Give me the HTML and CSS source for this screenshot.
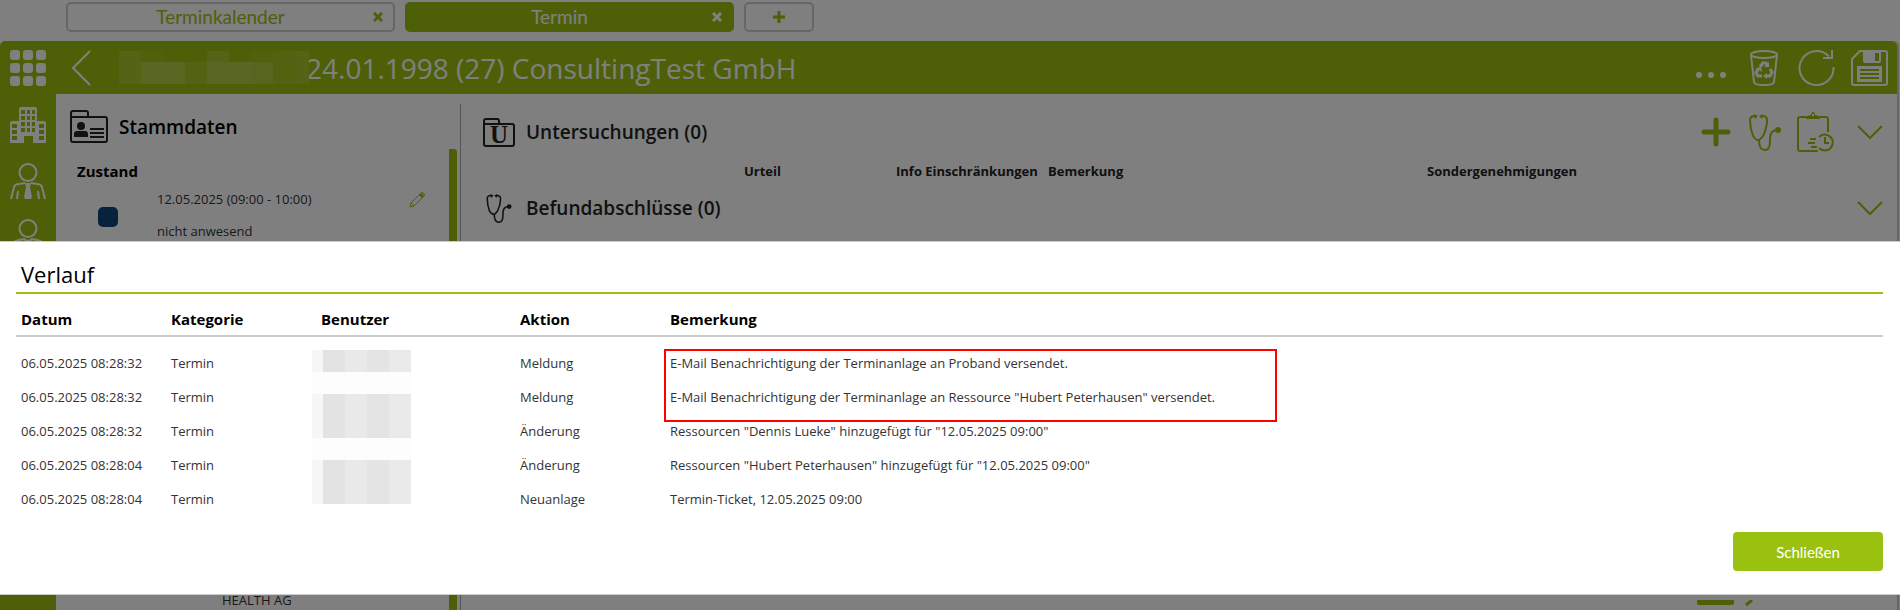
FILE: index.html
```html
<!DOCTYPE html>
<html lang="de">

<head>
  <meta charset="UTF-8" />
  <meta name="viewport" content="width=device-width, initial-scale=1.0" />
  <title>Termin</title>
  <link rel="stylesheet" href="styles.css">
</head>

<body>

  <!-- Tabs -->
  <nav class="tabs">
    <div class="tab">
      <button class="tab-label">Terminkalender</button>
      <button class="tab-close" aria-label="Terminkalender schließen">
        <svg width="10" height="10" viewBox="0 0 10 10"><path d="M1 1l8 8M9 1l-8 8" /></svg>
      </button>
    </div>
    <div class="tab active">
      <button class="tab-label">Termin</button>
      <button class="tab-close" aria-label="Termin schließen">
        <svg width="10" height="10" viewBox="0 0 10 10"><path d="M1 1l8 8M9 1l-8 8" /></svg>
      </button>
    </div>
    <button class="tab-add" aria-label="Neuer Tab">
      <svg width="12" height="12" viewBox="0 0 12 12"><path d="M6 0v12M0 6h12" /></svg>
    </button>
  </nav>

  <div class="app">
    <!-- Kopfzeile -->
    <header class="topbar">
      <button class="icon-btn apps" aria-label="Apps">
        <svg width="36" height="36" viewBox="0 0 36 36" fill="#fff">
          <rect x="0" y="0" width="10" height="10" rx="3" /><rect x="13" y="0" width="10" height="10" rx="3" /><rect x="26" y="0" width="10" height="10" rx="3" />
          <rect x="0" y="13" width="10" height="10" rx="3" /><rect x="13" y="13" width="10" height="10" rx="3" /><rect x="26" y="13" width="10" height="10" rx="3" />
          <rect x="0" y="26" width="10" height="10" rx="3" /><rect x="13" y="26" width="10" height="10" rx="3" /><rect x="26" y="26" width="10" height="10" rx="3" />
        </svg>
      </button>
      <button class="icon-btn back" aria-label="Zurück">
        <svg width="20" height="36" viewBox="0 0 20 36" fill="none" stroke="#fff" stroke-width="2"><path d="M19 1L2 18l17 17" /></svg>
      </button>
      <svg class="name-mask" width="190" height="33" viewBox="0 0 190 33" fill="#fff">
        <rect width="190" height="33" fill="#9bc110" />
        <rect x="0" y="0" width="22" height="33" fill-opacity=".12" />
        <rect x="22" y="0" width="22" height="11" fill-opacity=".03" />
        <rect x="22" y="11" width="44" height="22" fill-opacity=".22" />
        <rect x="66" y="11" width="22" height="22" fill-opacity=".1" />
        <rect x="88" y="0" width="22" height="11" fill-opacity=".12" />
        <rect x="88" y="11" width="44" height="22" fill-opacity=".22" />
        <rect x="132" y="0" width="22" height="11" fill-opacity=".03" />
        <rect x="132" y="11" width="22" height="22" fill-opacity=".2" />
        <rect x="154" y="0" width="22" height="33" fill-opacity=".08" />
        <rect x="176" y="0" width="14" height="33" fill-opacity=".12" />
      </svg>
      <h1>24.01.1998 (27) ConsultingTest GmbH</h1>
      <div class="topbar-actions">
        <button class="icon-btn more" aria-label="Mehr">
          <svg width="30" height="36" viewBox="0 0 30 36" fill="#fff"><circle cx="3" cy="25" r="3" /><circle cx="15" cy="25" r="3" /><circle cx="27" cy="25" r="3" /></svg>
        </button>
        <button class="icon-btn trash" aria-label="Löschen">
          <svg width="28" height="36" viewBox="0 0 28 36" fill="none" stroke="#fff" stroke-width="2">
            <ellipse cx="14" cy="4.500" rx="13" ry="3.500" />
            <path d="M1 5l3 27c0 2 4 3 10 3s10-1 10-3l3-27" />
            <g stroke-width="3"><path d="M10 17l3-4h3l2 3M20 19l2 3-2 4h-4M12 26H8l-2-3 2-4" /></g>
            <path d="M19 12v5h-5zM17 23v6l-4-3zM6 18l5-1 1 5z" fill="#fff" stroke="none" />
          </svg>
        </button>
        <button class="icon-btn" aria-label="Aktualisieren">
          <svg width="37" height="36" viewBox="0 0 37 36" fill="none" stroke="#fff" stroke-width="2"><path d="M35.500 17A17 17 0 1 1 31 6.500M34 0v8h-9" /></svg>
        </button>
        <button class="icon-btn" aria-label="Speichern">
          <svg width="37" height="36" viewBox="0 0 37 36" fill="none" stroke="#fff" stroke-width="2">
            <path d="M9 1h25q2 0 2 2v30q0 2-2 2H3q-2 0-2-2V9z" />
            <path d="M12 1h18v10q0 2-2 2H14q-2 0-2-2zM24 3v8h4V3zM6 16h25v16H6z" fill="#fff" fill-rule="evenodd" stroke="none" />
            <path d="M9 20h19M9 24h19M9 28h19" stroke="#9bc110" />
          </svg>
        </button>
      </div>
    </header>

    <div class="main">
      <!-- Seitenleiste -->
      <aside class="sidebar">
        <svg width="36" height="36" viewBox="0 0 36 36" fill="#fff">
          <path fill-rule="evenodd" d="M11 0h14q2 0 2 3v11h7q2 0 2 2v20H23v-7h-9v7H0V16q0-2 2-2h7V3q0-3 2-3zM11 3v4h4V3zM17 3v4h3V3zM22 3v4h3V3zM11 9v4h4V9zM17 9v4h3V9zM22 9v4h3V9zM11 15v4h4v-4zM17 15v4h3v-4zM22 15v4h3v-4zM11 21v4h4v-4zM17 21v4h3v-4zM22 21v4h3v-4zM2 17v4h5v-4zM2 23v4h5v-4zM2 29v4h5v-4zM29 17v4h5v-4zM29 23v4h5v-4zM29 29v4h5v-4z" />
        </svg>
        <svg width="36" height="36" viewBox="0 0 36 36" fill="none" stroke="#fff" stroke-width="2">
          <circle cx="18" cy="9.500" r="8.500" /><path d="M1 36l3-12q1-3 5-3l6-1M35 36l-3-12q-1-3-5-3l-6-1M8 28l-1 8M28 28l1 8" />
          <path d="M15 20h6l-1 4 2 10-1 2h-6l-1-2 2-10z" fill="#fff" stroke="none" />
        </svg>
        <svg width="36" height="36" viewBox="0 0 36 36" fill="none" stroke="#fff" stroke-width="2">
          <circle cx="18" cy="9.500" r="8.500" /><path d="M3 36V26q0-4 6-5l5-1q4 4 8 0l5 1q6 1 6 5v10" />
        </svg>
      </aside>

      <!-- Stammdaten -->
      <section class="master">
        <div class="master-title">
          <svg width="38" height="34" viewBox="0 0 38 34" fill="none" stroke="#222" stroke-width="2">
            <path d="M1 7V3q0-2 2-2h13q2 0 2 2v4M3 7h32q2 0 2 2v21q0 2-2 2H3q-2 0-2-2V7z" />
            <path d="M20 19h14M20 23h14M20 27h14" /><circle cx="11" cy="16" r="4" fill="#222" stroke="none" /><path d="M4 27v-3q0-3 3-3h8q3 0 3 3v3z" fill="#222" stroke="none" />
          </svg>
          <h2>Stammdaten</h2>
        </div>
        <div class="master-scroll">
          <h3>Zustand</h3>
          <div class="state">
            <span class="state-color"></span>
            <div class="state-text">
              <p>12.05.2025 (09:00 - 10:00)</p>
              <p>nicht anwesend</p>
            </div>
            <button class="icon-btn edit" aria-label="Bearbeiten">
              <svg width="16" height="16" viewBox="0 0 16 16" fill="none" stroke="#9bc110"><path d="M1 15l1-4L12 1q1-1 2 0l1 1q1 1 0 2L5 14zM2 11l3 3" /><path d="M11 2l3 3" stroke-width="3" /></svg>
            </button>
          </div>
          <p class="company">HEALTH AG</p>
        </div>
      </section>

      <!-- Untersuchungen und Befunde -->
      <section class="details">
        <div class="detail-title">
          <svg width="32" height="29" viewBox="0 0 32 29" fill="none" stroke="#222" stroke-width="2">
            <path d="M1 6V3q0-2 2-2h11q2 0 2 2v3M3 6h26q2 0 2 2v18q0 2-2 2H3q-2 0-2-2V6z" />
            <text class="folder-letter" x="16" y="25" text-anchor="middle" fill="#222" stroke="none">U</text>
          </svg>
          <h2>Untersuchungen (0)</h2>
          <div class="detail-actions">
            <button class="icon-btn" aria-label="Hinzufügen">
              <svg width="32" height="30" viewBox="0 0 32 30" fill="none" stroke="#9bc110" stroke-width="5" stroke-linecap="round"><path d="M15 3v24M3 15h24" /></svg>
            </button>
            <button class="icon-btn" aria-label="Befund">
              <svg width="32" height="37" viewBox="0 0 32 37" fill="none" stroke="#9bc110" stroke-width="2">
                <path d="M6 2q-5 0-5 4 0 8 3 16 3 4 5 4t5-4q4-8 4-16 0-4-5-4M10 26q0 10 6 10 5 0 5-9 0-7 2-9 2-2 6-2" />
                <path d="M5 0l4 2-3 3zM14 0l-4 2 3 3z" fill="#9bc110" stroke="none" /><circle cx="29" cy="16" r="3" fill="#9bc110" stroke="none" />
              </svg>
            </button>
            <button class="icon-btn" aria-label="Planen">
              <svg width="38" height="40" viewBox="0 0 38 40" fill="none" stroke="#9bc110" stroke-width="2">
                <path d="M31 20V7q0-2-2-2H3Q1 5 1 7v30q0 2 2 2h18" />
                <path fill-rule="evenodd" d="M9 7q1-4 5-4 0-3 2-3t2 3q4 0 5 4zM15 2v2h2V2z" fill="#9bc110" stroke="none" />
                <path d="M22 25a8 8 0 1 1 0 11M28 25v6h4M13 27h6M11 31h7M14 35h6" />
              </svg>
            </button>
            <button class="icon-btn chevron" aria-label="Untersuchungen aufklappen">
              <svg width="26" height="15" viewBox="0 0 26 15" fill="none" stroke="#9bc110" stroke-width="2"><path d="M1 1l12 12L25 1" /></svg>
            </button>
          </div>
        </div>
        <div class="exam-head">
          <span>Urteil</span><span>Info Einschränkungen</span><span>Bemerkung</span><span>Sondergenehmigungen</span>
        </div>
        <div class="detail-title">
          <svg width="32" height="29" viewBox="0 0 32 37" fill="none" stroke="#222" stroke-width="2">
            <path d="M6 2q-5 0-5 4 0 8 3 16 3 4 5 4t5-4q4-8 4-16 0-4-5-4M10 26q0 10 6 10 5 0 5-9 0-7 2-9 2-2 6-2" />
            <path d="M5 0l4 2-3 3zM14 0l-4 2 3 3z" fill="#222" stroke="none" /><circle cx="29" cy="16" r="3" fill="#222" stroke="none" />
          </svg>
          <h2>Befundabschlüsse (0)</h2>
          <div class="detail-actions">
            <button class="icon-btn chevron" aria-label="Befundabschlüsse aufklappen">
              <svg width="26" height="15" viewBox="0 0 26 15" fill="none" stroke="#9bc110" stroke-width="2"><path d="M1 1l12 12L25 1" /></svg>
            </button>
          </div>
        </div>
        <div class="finding-head">
          <span>Befund</span><span>Befundabschluss</span><span>Bearbeiter</span>
        </div>
        <div class="details-foot">
          <svg width="60" height="10" viewBox="0 0 60 10" fill="none" stroke="#9bc110" stroke-width="2">
            <path d="M0 0h37v3q0 2-2 2H2q-2 0-2-2z" fill="#9bc110" stroke="none" /><path d="M49 5l6-5" stroke-width="3" />
          </svg>
        </div>
      </section>
    </div>
  </div>

  <!-- Dialog Verlauf -->
  <div class="overlay">
    <div class="dialog" role="dialog" aria-labelledby="dialog-title">
      <h2 id="dialog-title">Verlauf</h2>
      <div class="history">
        <table>
          <thead>
            <tr><th class="col-s">Datum</th><th class="col-s">Kategorie</th><th class="col-m">Benutzer</th><th class="col-s">Aktion</th><th>Bemerkung</th></tr>
          </thead>
          <tbody>
            <tr><td>06.05.2025 08:28:32</td><td>Termin</td><td></td><td>Meldung</td><td>E-Mail Benachrichtigung der Terminanlage an Proband versendet.</td></tr>
            <tr><td>06.05.2025 08:28:32</td><td>Termin</td><td></td><td>Meldung</td><td>E-Mail Benachrichtigung der Terminanlage an Ressource "Hubert Peterhausen" versendet.</td></tr>
            <tr><td>06.05.2025 08:28:32</td><td>Termin</td><td></td><td>Änderung</td><td>Ressourcen "Dennis Lueke" hinzugefügt für "12.05.2025 09:00"</td></tr>
            <tr><td>06.05.2025 08:28:04</td><td>Termin</td><td></td><td>Änderung</td><td>Ressourcen "Hubert Peterhausen" hinzugefügt für "12.05.2025 09:00"</td></tr>
            <tr><td>06.05.2025 08:28:04</td><td>Termin</td><td></td><td>Neuanlage</td><td>Termin-Ticket, 12.05.2025 09:00</td></tr>
          </tbody>
        </table>
        <svg class="user-mask" width="99" height="154" viewBox="0 0 99 154">
          <rect width="99" height="154" fill="#fdfdfd" />
          <path d="M0 0h11v22H0zM0 44h11v44H0zM0 110h11v44H0z" fill="#f6f6f4" />
          <path d="M11 0h22v22H11zM11 44h22v44H11zM11 110h22v44H11z" fill="#e3e3e3" />
          <path d="M33 0h22v22H33zM33 44h22v44H33zM33 110h22v44H33z" fill="#e9e9e9" />
          <path d="M55 0h22v22H55zM55 44h22v44H55zM55 110h22v44H55z" fill="#e4e4e4" />
          <path d="M77 0h22v22H77zM77 44h22v44H77zM77 110h22v44H77z" fill="#eaeaea" />
        </svg>
        <div class="marker"></div>
      </div>
      <div class="dialog-foot">
        <button class="btn">Schließen</button>
      </div>
    </div>
  </div>

</body>

</html>
```
FILE: styles.css
```css
* {
  box-sizing: border-box;
}
body {
  margin: 0;
  height: 100vh;
  overflow: hidden;
  display: flex;
  flex-direction: column;
  font-family: "Open Sans", "Noto Sans", sans-serif;
  font-size: 13px;
  color: #333;
  background: #fff;
}
h1, h2, h3, p {
  margin: 0;
}
button {
  font: inherit;
  color: inherit;
  background: none;
  border: none;
  padding: 0;
  cursor: pointer;
}
svg {
  display: block;
}

/* Tabs */
.tabs {
  display: flex;
  gap: 10px;
  padding: 2px 0 9px 66px;
  color: #9bc110;
}
.tab, .tab-add {
  height: 30px;
  border: 2px solid #ccc;
  border-radius: 5px;
}
.tab {
  width: 329px;
  display: flex;
  align-items: center;
  padding-right: 10px;
}
.tab-label {
  flex: 1;
  font-family: Lato, sans-serif;
  font-size: 19px;
  line-height: 26px;
}
.tab path, .tab-add path {
  fill: none;
  stroke: currentColor;
  stroke-width: 3;
}
.tab.active {
  color: #fff;
  background: #9bc110;
  border-color: #9bc110;
}
.tab-add {
  width: 70px;
  display: flex;
  align-items: center;
  justify-content: center;
}

/* Kopfzeile */
.app {
  flex: 1;
  min-height: 0;
  display: flex;
  flex-direction: column;
  margin-right: 1px;
  border-right: 2px solid #ccc;
  border-radius: 5px 5px 0 0;
}
.topbar {
  height: 53px;
  flex: none;
  display: flex;
  align-items: center;
  padding: 0 9px 0 10px;
  color: #fff;
  background: #9bc110;
  border-radius: 5px 5px 0 0;
}
.topbar h1 {
  margin-left: -3px;
  font-size: 28px;
  font-weight: 400;
  line-height: 36px;
}
.back {
  margin: 0 28px 0 25px;
}
.name-mask {
  position: relative;
  z-index: 1;
}
.topbar-actions {
  display: flex;
  align-items: center;
  gap: 16px;
  margin-left: auto;
}
.more, .trash {
  padding: 0 4px;
}

/* Seitenleiste */
.main {
  flex: 1;
  min-height: 0;
  display: flex;
}
.sidebar {
  width: 56px;
  display: flex;
  flex-direction: column;
  gap: 20px;
  padding: 13px 10px;
  background: #9bc110;
}

/* Stammdaten */
.master {
  width: 405px;
  margin-top: 10px;
  display: flex;
  flex-direction: column;
  border-right: 1px solid #aaa;
}
.master-title {
  display: flex;
  align-items: center;
  gap: 11px;
  padding: 6px 14px 5px;
}
.master h2, .details h2 {
  font-size: 19px;
  font-weight: 600;
  line-height: 28px;
  color: #222;
}
.master .master-title h2 {
  color: #000;
}
.master-scroll {
  flex: 1;
  min-height: 0;
  display: flex;
  flex-direction: column;
  margin-right: 3px;
  padding: 10px 24px 0 21px;
  border-right: 8px solid #9bc110;
  border-top-right-radius: 3px;
}
.master h3 {
  font-size: 15px;
  line-height: 24px;
  color: #000;
}
.state {
  display: flex;
  align-items: flex-start;
}
.state-color {
  width: 20px;
  height: 20px;
  margin: 24px 39px 0 21px;
  border-radius: 5px;
  background: #10457a;
}
.state-text {
  flex: 1;
}
.state-text p {
  line-height: 32px;
}
.edit {
  margin-top: 9px;
}
.company {
  margin-top: auto;
  padding-left: 145px;
  line-height: 20px;
}

/* Untersuchungen und Befunde */
.details {
  flex: 1;
  display: flex;
  flex-direction: column;
  padding: 15px 14px 0 22px;
}
.detail-title {
  display: flex;
  align-items: center;
  gap: 11px;
  height: 46px;
}
.folder-letter {
  font-family: "Liberation Serif", serif;
  font-size: 25px;
  font-weight: 700;
}
.detail-actions {
  display: flex;
  align-items: center;
  gap: 16px;
  margin-left: auto;
}
.chevron {
  margin-left: 6px;
}
.exam-head, .finding-head {
  display: grid;
  font-weight: 700;
  color: #222;
}
.exam-head {
  grid-template-columns: 152px 152px 379px 1fr;
  padding: 2px 0 0 261px;
  line-height: 28px;
}
.finding-head {
  grid-template-columns: 178px 431px 1fr;
  padding-left: 0;
  line-height: 30px;
}
.details-foot {
  margin-top: auto;
  align-self: flex-end;
  padding-right: 126px;
}

/* Dialog */
.overlay {
  position: fixed;
  inset: 0;
  z-index: 2;
  padding-top: 241px;
  background: rgba(0,0,0,0.5);
}
.dialog {
  padding: 16px 17px 23px 16px;
  background: #fff;
  border: solid #ccc;
  border-width: 1px 0;
}
.dialog h2 {
  padding: 0 0 2px 5px;
  font-size: 22px;
  font-weight: 400;
  line-height: 32px;
  color: #000;
  border-bottom: 2px solid #9bc110;
}
.history {
  position: relative;
  padding-top: 9px;
}
.history table {
  width: 100%;
  table-layout: fixed;
  border-collapse: collapse;
}
.history th {
  padding: 0 5px;
  font-size: 15px;
  line-height: 32px;
  text-align: left;
  color: #000;
  border-bottom: 2px solid #ccc;
}
.history td {
  height: 34px;
  padding: 0 5px;
}
.history tbody::before {
  content: "";
  display: block;
  height: 9px;
}
.col-s {
  width: 150px;
}
.col-m {
  width: 199px;
}
.user-mask {
  position: absolute;
  left: 296px;
  top: 56px;
}
.marker {
  position: absolute;
  left: 648px;
  top: 55px;
  width: 613px;
  height: 73px;
  border: 2px solid #f00;
}
.dialog-foot {
  display: flex;
  justify-content: flex-end;
  padding-top: 16px;
}
.btn {
  width: 150px;
  height: 39px;
  border-radius: 4px;
  font-family: Lato, sans-serif;
  font-size: 15px;
  color: #fff;
  background: #9bc110;
}
```
